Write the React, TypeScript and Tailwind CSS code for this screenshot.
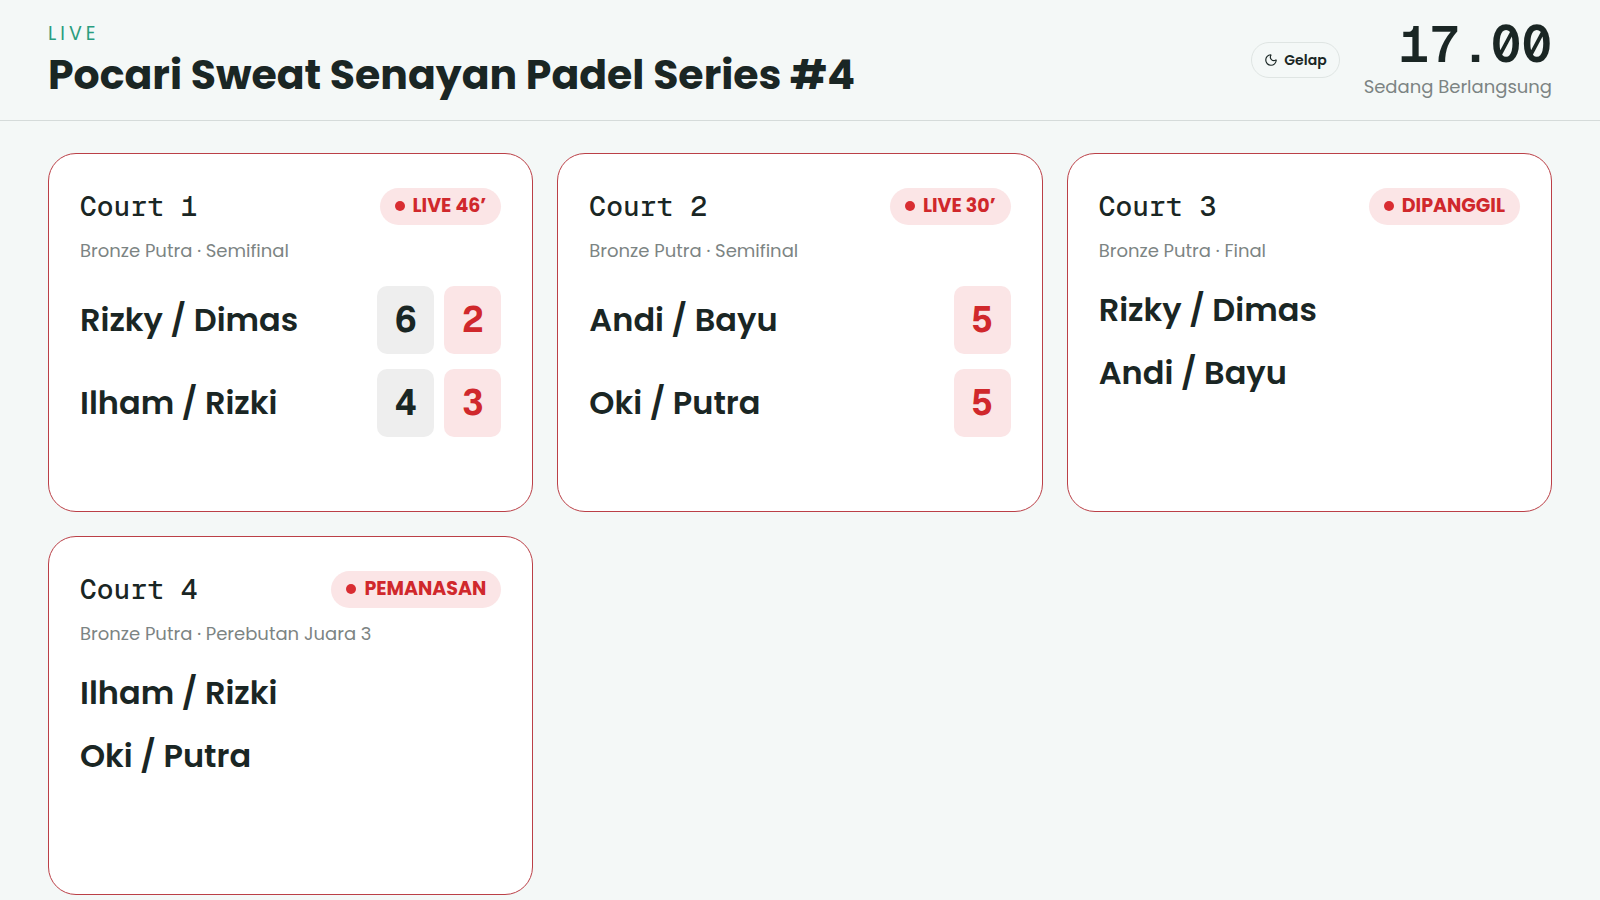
import { useState } from 'react';
import { Moon } from 'lucide-react';

interface Team {
  name: string;
  sets: number[];
}

interface Court {
  id: number;
  status: string;
  category: string;
  teams: Team[];
}

const COURTS: Court[] = [
  {
    id: 1,
    status: 'LIVE 46’',
    category: 'Bronze Putra · Semifinal',
    teams: [
      { name: 'Rizky / Dimas', sets: [6, 2] },
      { name: 'Ilham / Rizki', sets: [4, 3] },
    ],
  },
  {
    id: 2,
    status: 'LIVE 30’',
    category: 'Bronze Putra · Semifinal',
    teams: [
      { name: 'Andi / Bayu', sets: [5] },
      { name: 'Oki / Putra', sets: [5] },
    ],
  },
  {
    id: 3,
    status: 'DIPANGGIL',
    category: 'Bronze Putra · Final',
    teams: [
      { name: 'Rizky / Dimas', sets: [] },
      { name: 'Andi / Bayu', sets: [] },
    ],
  },
  {
    id: 4,
    status: 'PEMANASAN',
    category: 'Bronze Putra · Perebutan Juara 3',
    teams: [
      { name: 'Ilham / Rizki', sets: [] },
      { name: 'Oki / Putra', sets: [] },
    ],
  },
];

function StatusBadge({ label }: { label: string }) {
  return (
    <span className="flex shrink-0 items-center gap-2 rounded-full bg-[#fbe5e6] px-[15px] pt-1 pb-[5px] text-[19px] leading-7 font-bold text-[#d0282c]">
      <span className="h-[10px] w-[10px] rounded-full bg-[#d92d32]" />
      {label}
    </span>
  );
}

function TeamRow({ team }: { team: Team }) {
  return (
    <li className="flex items-center justify-between gap-4">
      <span className="truncate text-[32px] leading-[48px] font-semibold">{team.name}</span>
      {team.sets.length > 0 && (
        <div className="flex gap-[10px]">
          {team.sets.map((score, i) => {
            // The last set is the one being played
            const current = i === team.sets.length - 1;

            return (
              <span
                key={i}
                className={`flex h-[68px] w-[57px] items-center justify-center rounded-[10px] font-['Geist_Mono','Liberation_Mono',monospace] text-4xl font-bold ${
                  current ? 'bg-[#fbe5e6] text-[#d0282c]' : 'bg-[#eeeeee]'
                }`}
              >
                {score}
              </span>
            );
          })}
        </div>
      )}
    </li>
  );
}

function CourtCard({ court }: { court: Court }) {
  return (
    <article className="min-h-[359px] rounded-[28px] border border-[#bb4047] bg-white px-[31px] pt-[31px] pb-8">
      <div className="flex items-center justify-between gap-4">
        <h2 className="font-['Geist_Mono','Liberation_Mono',monospace] text-[28px] leading-[42px] font-medium">
          Court {court.id}
        </h2>
        <StatusBadge label={court.status} />
      </div>
      <p className="mt-[11px] text-lg leading-[26px] text-[#7c8483]">{court.category}</p>
      <ul className="mt-[22px] flex flex-col gap-[15px]">
        {court.teams.map((team) => (
          <TeamRow key={team.name} team={team} />
        ))}
      </ul>
    </article>
  );
}

function App() {
  const [dark, setDark] = useState(false);

  return (
    <div className="min-h-screen bg-[#f4f8f7] font-['Poppins','Inter',sans-serif] text-[#1a2624]">
      <header className="flex items-center justify-between border-b border-[#d5dbda] px-12 py-5">
        <div>
          <p className="text-[19px] leading-7 tracking-[4px] text-[#2a9d80]">LIVE</p>
          <h1 className="pt-px text-[41px] leading-[51px] font-bold">Pocari Sweat Senayan Padel Series #4</h1>
        </div>
        <div className="flex items-center gap-6">
          <button
            type="button"
            aria-pressed={dark}
            onClick={() => setDark(!dark)}
            className="flex h-9 items-center gap-[6px] rounded-full border border-[#dfe5e3] px-3 text-sm font-semibold"
          >
            <Moon size={14} strokeWidth={2} />
            Gelap
          </button>
          <div className="text-right">
            <p className="font-['Geist_Mono','Liberation_Mono',monospace] text-[51px] leading-[48px] font-semibold">17.00</p>
            <p className="mt-[6px] text-lg leading-[26px] text-[#7c8483]">Sedang Berlangsung</p>
          </div>
        </div>
      </header>
      <main className="grid grid-cols-3 gap-6 px-12 pt-8">
        {COURTS.map((court) => (
          <CourtCard key={court.id} court={court} />
        ))}
      </main>
    </div>
  );
}

export default App;
